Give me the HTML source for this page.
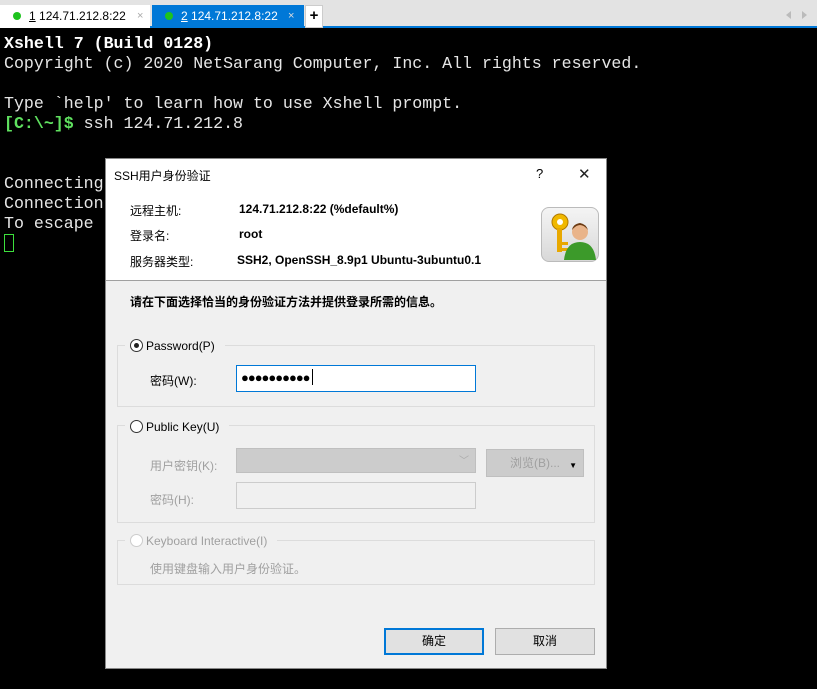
<!DOCTYPE html>
<html><head><meta charset="utf-8"><style>
*{margin:0;padding:0;box-sizing:border-box}
body{width:817px;height:689px;background:#000;position:relative;overflow:hidden;font-family:"Liberation Sans","Noto Sans CJK SC",sans-serif}
.tabs{position:absolute;left:0;top:0;width:817px;height:28px;background:#e3e3e3;border-bottom:2px solid #0078d7}
.tab{position:absolute;top:5px;height:23px;font-size:12px;line-height:23px}
.dot{display:inline-block;width:8px;height:8px;border-radius:50%;background:#1ec31e;margin:0 8px 0 13px;vertical-align:0}
.term{position:absolute;left:4px;top:34px;font-family:"Liberation Mono",monospace;font-size:16.6px;line-height:20px;color:#e6e6e6;white-space:pre}
.abs{position:absolute}
.dlg{position:absolute;left:105px;top:158px;width:502px;height:511px;background:#f0f0f0;border:1px solid #888}
.lbl{position:absolute;font-size:12px;color:#000;white-space:nowrap}
.b{font-weight:bold}
.grp{position:absolute;border:1px solid #dcdcdc}
.radio{display:inline-block;width:13px;height:13px;border:1px solid #333;border-radius:50%;vertical-align:-2px;margin-right:3px;background:#fff;position:relative}
.gray{color:#a0a0a0}
.btn{position:absolute;height:27px;background:#e1e1e1;border:1px solid #adadad;font-size:12px;text-align:center;line-height:25px}
</style></head><body>
<div class="tabs">
 <div class="tab" style="left:0;width:150px;background:#fff;color:#000"><span class="dot"></span><u>1</u> 124.71.212.8:22<span style="position:absolute;left:137px;color:#aaa;font-size:11px">×</span></div>
 <div class="tab" style="left:152px;width:152px;background:#0078d7;color:#fff"><span class="dot"></span><u>2</u> 124.71.212.8:22<span style="position:absolute;left:136px;color:#ddd;font-size:11px">×</span></div>
 <div class="tab" style="left:305px;width:18px;background:#fff;border:1px solid #ccc;text-align:center;font-weight:bold;font-size:15px;line-height:20px">+</div>
 <div class="abs" style="left:786px;top:11px;width:0;height:0;border:4px solid transparent;border-right:5px solid #bbb;border-left:0"></div>
 <div class="abs" style="left:802px;top:11px;width:0;height:0;border:4px solid transparent;border-left:5px solid #bbb;border-right:0"></div>
</div>
<div class="term"><b style="color:#fff">Xshell 7 (Build 0128)</b>
Copyright (c) 2020 NetSarang Computer, Inc. All rights reserved.

Type `help' to learn how to use Xshell prompt.
<b style="color:#5fe05f">[C:\~]$</b> ssh 124.71.212.8


Connecting
Connection
To escape
<span style="display:inline-block;width:10px;height:18px;border:1px solid #3ce03c;vertical-align:-4px"></span></div>
<div class="dlg">
 <div class="abs" style="left:0;top:0;width:500px;height:122px;background:#fff;border-bottom:1px solid #a0a0a0"></div>
 <div class="lbl" style="left:8px;top:8px">SSH用户身份验证</div>
 <div class="lbl" style="left:430px;top:7px;font-size:13px">?</div>
 <div class="lbl" style="left:472px;top:6px;font-size:15px;color:#222">✕</div>
 <div class="lbl" style="left:24px;top:43px">远程主机:</div>
 <div class="lbl" style="left:24px;top:68px">登录名:</div>
 <div class="lbl" style="left:24px;top:94px">服务器类型:</div>
 <div class="lbl b" style="left:133px;top:43px">124.71.212.8:22 (%default%)</div>
 <div class="lbl b" style="left:133px;top:68px">root</div>
 <div class="lbl b" style="left:131px;top:94px">SSH2, OpenSSH_8.9p1 Ubuntu-3ubuntu0.1</div>
 <div class="abs" style="left:435px;top:48px;width:58px;height:55px;border:1px solid #bbb;border-radius:8px;background:linear-gradient(#f4f4f4,#d8d8d8)">
  <svg width="58" height="55"><circle cx="18" cy="14" r="8" fill="#f0b800" stroke="#b07800"/><circle cx="18" cy="14" r="3" fill="#fff"/><rect x="15" y="20" width="5" height="24" fill="#e8a800"/><rect x="20" y="34" width="6" height="3" fill="#e8a800"/><rect x="20" y="40" width="6" height="3" fill="#e8a800"/><path d="M22 52 Q24 34 38 34 Q52 34 54 52Z" fill="#3c9a2a"/><circle cx="38" cy="24" r="8" fill="#e9b48a"/><path d="M30 22 Q38 12 46 22 Q44 16 38 15 Q31 16 30 22Z" fill="#6b3a12"/></svg>
 </div>
 <div class="lbl b" style="left:24px;top:134px">请在下面选择恰当的身份验证方法并提供登录所需的信息。</div>
 <div class="grp" style="left:11px;top:186px;width:478px;height:62px"></div>
 <div class="lbl" style="left:19px;top:180px;background:#f0f0f0;padding:0 10px 0 5px"><span class="radio"><span style="position:absolute;left:3px;top:3px;width:5px;height:5px;border-radius:50%;background:#222"></span></span>Password(P)</div>
 <div class="lbl" style="left:44px;top:213px">密码(W):</div>
 <div class="abs" style="left:130px;top:206px;width:240px;height:27px;background:#fff;border:1px solid #0078d7;font-size:13px;line-height:24px;padding-left:4px;letter-spacing:-1px">●●●●●●●●●●<span style="display:inline-block;width:1px;height:16px;background:#000;vertical-align:-3px;margin-left:2px"></span></div>
 <div class="grp" style="left:11px;top:266px;width:478px;height:98px"></div>
 <div class="lbl" style="left:19px;top:261px;background:#f0f0f0;padding:0 10px 0 5px"><span class="radio"></span>Public Key(U)</div>
 <div class="lbl gray" style="left:44px;top:298px">用户密钥(K):</div>
 <div class="abs" style="left:130px;top:289px;width:240px;height:25px;background:#ccc;border:1px solid #bfbfbf"><span style="position:absolute;right:6px;top:3px;color:#aaa;font-size:10px">﹀</span></div>
 <div class="abs" style="left:380px;top:290px;width:98px;height:28px;background:#ccc;border:1px solid #bfbfbf;font-size:12px;color:#a0a0a0;line-height:26px;padding-left:23px">浏览(B)...<span style="position:absolute;right:6px;top:3px;color:#000;font-size:8px">▼</span></div>
 <div class="lbl gray" style="left:44px;top:332px">密码(H):</div>
 <div class="abs" style="left:130px;top:323px;width:240px;height:27px;background:#f0f0f0;border:1px solid #ccc"></div>
 <div class="grp" style="left:11px;top:381px;width:478px;height:45px"></div>
 <div class="lbl gray" style="left:19px;top:375px;background:#f0f0f0;padding:0 10px 0 5px"><span class="radio" style="border-color:#ccc"></span>Keyboard Interactive(I)</div>
 <div class="lbl gray" style="left:44px;top:401px">使用键盘输入用户身份验证。</div>
 <div class="btn" style="left:278px;top:469px;width:100px;border:2px solid #0078d7;line-height:23px">确定</div>
 <div class="btn" style="left:389px;top:469px;width:100px">取消</div>
</div>
</body></html>
